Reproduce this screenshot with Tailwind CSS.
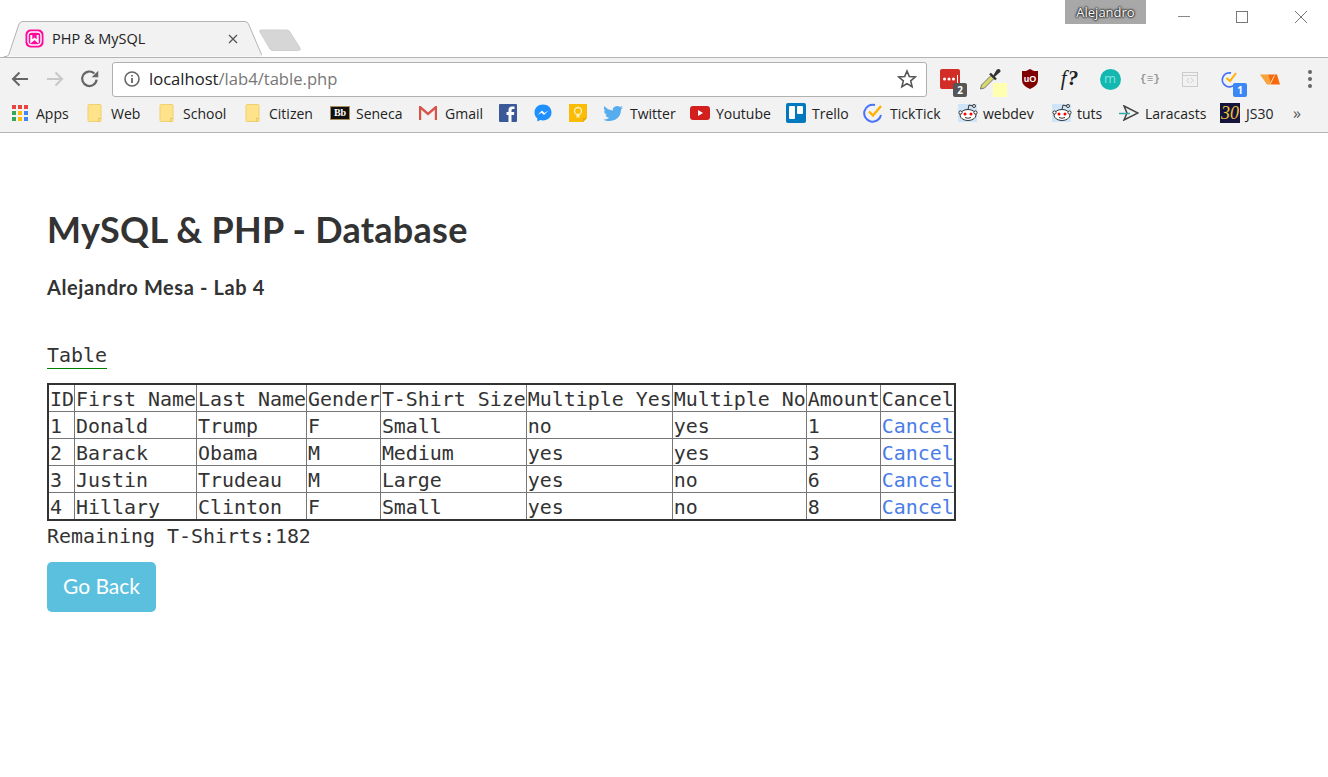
<!DOCTYPE html>
<html lang="en">
<head>
    <meta charset="UTF-8">
    <title>PHP &amp; MySQL</title>
    <script src="https://cdn.jsdelivr.net/npm/@tailwindcss/browser@4"></script>
</head>
<body class="bg-white overflow-hidden h-[777px] font-['Open_Sans',sans-serif]">

<!-- title bar with tabs -->
<div class="h-[57px] flex relative">
    <div class="relative w-[258px] h-[36px] mt-[21px] ml-[4px] flex items-center pl-[21px] pr-[24px] pb-[1px] text-[14.500px] text-[#222]">
        <svg class="absolute left-0 top-0" width="258" height="36" viewBox="0 0 258 36">
            <path d="M0 35.5 H2 Q4 35.5 5 33 L15 3 Q16 .5 19 .5 H241 Q243.500 .5 244.500 3 L256 30 Q258 35.500 260 35.500" fill="#f2f2f2" stroke="#b4b4b4"/>
        </svg>
        <svg class="relative mr-[8px]" width="19" height="19" viewBox="0 0 19 19">
            <rect x="0.500" y="0.500" width="18" height="18" rx="5" fill="#ff0a9c"/>
            <rect x="3" y="3" width="13" height="13" rx="3.500" fill="none" stroke="#fff" stroke-width="1.400"/>
            <path d="M6.300 6 V12.500 L9.500 9.800 L12.700 12.500 V6" fill="none" stroke="#fff" stroke-width="2"/>
        </svg>
        <span class="relative flex-1">PHP &amp; MySQL</span>
        <svg class="relative" width="10" height="10" viewBox="0 0 10 10"><path d="M1 1 L9 9 M9 1 L1 9" stroke="#555" stroke-width="1.300"/></svg>
    </div>
    <svg class="mt-[29px] -ml-[3px]" width="44" height="23" viewBox="0 0 44 23">
        <path d="M2 1 H28 Q30 1 31 3 L41 19 Q42 21.500 39 21.500 H14 Q12 21.500 11 20 L1 3 Q0 1 2 1Z" fill="#d6d6d6" stroke="#cfcfcf"/>
    </svg>
    <div class="absolute left-[1065px] top-0 w-[81px] h-[24px] bg-[#a8a8a8] text-white text-[13px] leading-[24px] text-center [text-shadow:0_0_1px_#222,0_0_2px_#222,0_0_2px_#222,0_0_3px_#333]">Alejandro</div>
    <svg class="absolute left-[1178px] top-[10px]" width="135" height="14" viewBox="0 0 135 14">
        <path d="M0 6.500 H12" stroke="#888"/>
        <rect x="58.500" y="1.500" width="11" height="11" fill="none" stroke="#777"/>
        <path d="M117 1 L129 13 M129 1 L117 13" stroke="#777"/>
    </svg>
</div>

<!-- toolbar -->
<div class="h-[39px] bg-[#f2f2f2] border-t border-[#b4b4b4] flex items-center relative pt-[4px]">
    <div class="w-[112px] flex items-center pl-[10px] gap-[15px] shrink-0">
        <svg width="20" height="20" viewBox="0 0 20 20"><path d="M18 10 H3 M9.500 3.500 L3 10 L9.500 16.500" fill="none" stroke="#666" stroke-width="2"/></svg>
        <svg width="20" height="20" viewBox="0 0 20 20"><path d="M2 10 H17 M10.500 3.500 L17 10 L10.500 16.500" fill="none" stroke="#c8c8c8" stroke-width="2"/></svg>
        <svg width="22" height="22" viewBox="0 0 20 20" class="-ml-[1px]"><path d="M16 10.500 A6.600 6.600 0 1 1 14 5" fill="none" stroke="#666" stroke-width="2"/><path d="M17.500 2.500 V8.500 H11.500Z" fill="#666"/></svg>
    </div>
    <div class="w-[815px] h-[35px] bg-white border border-[#b0b0b0] rounded-[3px] flex items-center pl-[10px] pr-[9px] shrink-0">
        <svg class="mr-[8px]" width="18" height="18" viewBox="0 0 18 18"><circle cx="9" cy="9" r="7" fill="none" stroke="#666" stroke-width="1.600"/><path d="M9 8 V13 M9 5 V6.600" stroke="#666" stroke-width="1.800"/></svg>
        <span class="flex-1 mt-px text-[16.600px] text-[#777]"><span class="text-[#222]">localhost</span>/lab4/table.php</span>
        <svg width="20" height="20" viewBox="0 0 20 20"><path d="M10 2 L12.300 7.500 L18.300 8 L13.700 11.900 L15.100 17.700 L10 14.600 L4.900 17.700 L6.300 11.900 L1.700 8 L7.700 7.500Z" fill="none" stroke="#555" stroke-width="1.600"/></svg>
    </div>
    <div class="flex ml-[3px]">
        <div class="w-[40px] h-[28px] relative flex justify-center items-center">
            <svg width="22" height="22" viewBox="0 0 22 22"><rect x="1" y="1" width="20" height="20" rx="2" fill="#d32d27"/><circle cx="5.500" cy="11" r="1.500" fill="#fff"/><circle cx="10" cy="11" r="1.500" fill="#fff"/><circle cx="14.500" cy="11" r="1.500" fill="#fff"/><path d="M18.500 7 V15" stroke="#fff"/></svg>
            <span class="absolute left-[23px] top-[18px] w-[14px] h-[14px] bg-[#555] rounded-[2px] text-white text-[10px] leading-[14px] text-center font-bold">2</span>
        </div>
        <div class="w-[40px] h-[28px] relative flex justify-center items-center">
            <svg width="24" height="24" viewBox="0 0 24 24"><path d="M2.500 22 L3.500 18 L13 8.500 L16 11.500 L6.500 21Z" fill="#d9d76a" stroke="#777"/><path d="M12 6.500 L18 12.500" stroke="#333" stroke-width="2.400"/><path d="M15 9 L18.500 3 Q21 1 22.500 3.500 Q23 5 21 6 L16 10.500Z" fill="#333"/></svg>
            <span class="absolute left-[23px] top-[18px] w-[14px] h-[14px] bg-[#ffffb0]"></span>
        </div>
        <div class="w-[40px] h-[28px] flex justify-center items-center">
            <svg width="20" height="22" viewBox="0 0 20 22"><path d="M10 1 L14 3 H18 V12 Q18 18 10 21 Q2 18 2 12 V3 H6Z" fill="#800000"/><text x="10" y="14" font-size="9" font-weight="700" fill="#fff" text-anchor="middle" font-family="Liberation Sans">uO</text></svg>
        </div>
        <div class="w-[40px] h-[28px] flex justify-center items-center font-['Liberation_Serif',serif] italic text-[21px] tracking-[1px] text-[#222]">f<b>?</b></div>
        <div class="w-[40px] h-[28px] flex justify-center items-center">
            <span class="w-[21px] h-[21px] rounded-full bg-[#14b8b0] text-[#7fe3dc] text-[13px] leading-[19px] text-center">m</span>
        </div>
        <div class="w-[40px] h-[28px] flex justify-center items-center text-[11px] font-bold text-[#999] font-['Liberation_Mono',monospace]">{≡}</div>
        <div class="w-[40px] h-[28px] flex justify-center items-center">
            <svg width="16" height="15" viewBox="0 0 16 15"><rect x=".5" y=".5" width="15" height="14" fill="none" stroke="#ccc"/><path d="M.5 3.500 H15.500 M7 6 L5 8.500 L7 11 M9 6 L11 8.500 L9 11" fill="none" stroke="#ccc"/></svg>
        </div>
        <div class="w-[40px] h-[28px] relative flex justify-center items-center">
            <svg width="18" height="18" viewBox="0 0 18 18"><path d="M14 14 A7 7 0 1 1 10 3" fill="none" stroke="#4772fa" stroke-width="1.800"/><path d="M5.500 8 L9 11 L15 3" fill="none" stroke="#ffb000" stroke-width="2"/></svg>
            <span class="absolute left-[23px] top-[18px] w-[14px] h-[14px] bg-[#3b87f5] rounded-[2px] text-white text-[10px] leading-[14px] text-center font-bold">1</span>
        </div>
        <div class="w-[40px] h-[28px] flex justify-center items-center">
            <svg width="20" height="11" viewBox="0 0 20 11"><path d="M0 .5 H8 L11 10.500 H7Z" fill="#f9a13a"/><path d="M8 .5 H17 L20 10.500 H11Z" fill="#f76a0c"/><path d="M14.500 1.500 L10.500 9.500" stroke="#ffd9b0" stroke-width="1"/></svg>
        </div>
        <div class="w-[40px] h-[28px] flex flex-col justify-center items-center gap-[3px]">
            <span class="w-[4px] h-[4px] rounded-full bg-[#666]"></span>
            <span class="w-[4px] h-[4px] rounded-full bg-[#666]"></span>
            <span class="w-[4px] h-[4px] rounded-full bg-[#666]"></span>
        </div>
    </div>
</div>

<!-- bookmarks bar -->
<div class="h-[37px] bg-[#f2f2f2] border-b border-[#b4b4b4] flex items-center pl-[12px] pb-[2px] text-[14px] text-[#222] whitespace-nowrap">
    <div class="w-[75px] flex items-center gap-[8px]">
        <svg width="16" height="16" viewBox="0 0 16 16">
            <rect x="0" y="0" width="4" height="4" fill="#e8453c"/><rect x="6" y="0" width="4" height="4" fill="#e8453c"/><rect x="12" y="0" width="4" height="4" fill="#e8453c"/>
            <rect x="0" y="6" width="4" height="4" fill="#34a853"/><rect x="6" y="6" width="4" height="4" fill="#fbbc05"/><rect x="12" y="6" width="4" height="4" fill="#4285f4"/>
            <rect x="0" y="12" width="4" height="4" fill="#34a853"/><rect x="6" y="12" width="4" height="4" fill="#fbbc05"/><rect x="12" y="12" width="4" height="4" fill="#4285f4"/>
        </svg>
        Apps
    </div>
    <div class="w-[72px] flex items-center gap-[9px]">
        <svg width="15" height="18" viewBox="0 0 15 18"><path d="M1 1.500 Q1 .5 2 .5 H13 Q14 .5 14 1.500 V17.500 H2 Q1 17.500 1 16.500Z" fill="#ffe38a" stroke="#f0d070"/><path d="M11.500 17.500 V14.500 H14" fill="none" stroke="#e8c560"/></svg>
        Web
    </div>
    <div class="w-[86px] flex items-center gap-[9px]">
        <svg width="15" height="18" viewBox="0 0 15 18"><path d="M1 1.500 Q1 .5 2 .5 H13 Q14 .5 14 1.500 V17.500 H2 Q1 17.500 1 16.500Z" fill="#ffe38a" stroke="#f0d070"/><path d="M11.500 17.500 V14.500 H14" fill="none" stroke="#e8c560"/></svg>
        School
    </div>
    <div class="w-[85px] flex items-center gap-[9px]">
        <svg width="15" height="18" viewBox="0 0 15 18"><path d="M1 1.500 Q1 .5 2 .5 H13 Q14 .5 14 1.500 V17.500 H2 Q1 17.500 1 16.500Z" fill="#ffe38a" stroke="#f0d070"/><path d="M11.500 17.500 V14.500 H14" fill="none" stroke="#e8c560"/></svg>
        Citizen
    </div>
    <div class="w-[89px] flex items-center gap-[6px]">
        <span class="w-[20px] h-[14px] bg-[#111] border border-[#a98f5a] text-white text-[10px] leading-[12px] text-center font-['Liberation_Serif',serif] font-bold">Bb</span>
        Seneca
    </div>
    <div class="w-[80px] flex items-center gap-[8px]">
        <svg width="18" height="14" viewBox="0 0 18 14"><path d="M1 14 V1 L9 8 L17 1 V14" fill="none" stroke="#d9534a" stroke-width="2.400"/></svg>
        Gmail
    </div>
    <div class="w-[35px] flex items-center">
        <svg width="18" height="18" viewBox="0 0 18 18"><rect width="18" height="18" rx="1" fill="#3b5998"/><path d="M12.500 18 V11 H15 L15.300 8 H12.500 V6.300 Q12.500 5 14 5 H15.500 V2.500 H13 Q9.500 2.500 9.500 6 V8 H7.500 V11 H9.500 V18Z" fill="#fff"/></svg>
    </div>
    <div class="w-[34px] flex items-center">
        <svg width="18" height="18" viewBox="0 0 18 18"><path d="M9 .5 C4 .5 .5 4 .5 8.500 C.5 11 1.500 13 3.300 14.300 V17.500 L6.300 16 Q7.500 16.400 9 16.400 C14 16.400 17.500 13 17.500 8.500 C17.500 4 14 .5 9 .5Z" fill="#1e90ff"/><path d="M3.500 11 L8 6.500 L10.500 9 L14.500 6.500 L10 11 L7.500 8.700Z" fill="#fff"/></svg>
    </div>
    <div class="w-[35px] flex items-center">
        <svg width="20" height="20" viewBox="0 0 20 20"><path d="M1 1 H19 V15 L15 19 H1Z" fill="#fbbc05"/><path d="M19 15 L15 19 V15Z" fill="#e8a800"/><circle cx="10" cy="8" r="3.500" fill="none" stroke="#fff3c4" stroke-width="1.300"/><path d="M8.500 12 H11.500 V14.500 H8.500Z" fill="#fff3c4"/></svg>
    </div>
    <div class="w-[87px] flex items-center gap-[7px]">
        <svg width="20" height="17" viewBox="0 0 20 17"><path d="M20 2.500 Q18.800 3 17.700 3.200 Q19 2.400 19.500 1 Q18.200 1.700 17 2 C15 0 11 1 10 3.500 Q9.700 4.500 10 5.500 C6.500 5.300 3.300 3.700 1.400 1 C.5 3 1 5 2.700 6.300 Q1.800 6.300 1 5.800 C1 7.800 2.300 9.300 4.200 9.800 Q3.300 10 2.500 9.900 C3 11.500 4.500 12.600 6.300 12.700 C4.500 14 2.500 14.600 .3 14.400 C6 18 18 16 18 4.500 Q19.200 3.700 20 2.500Z" fill="#55acee"/></svg>
        Twitter
    </div>
    <div class="w-[96px] flex items-center gap-[6px]">
        <svg width="20" height="14" viewBox="0 0 20 14"><rect width="20" height="14" rx="3" fill="#d3201f"/><path d="M8 4 L13 7 L8 10Z" fill="#fff"/></svg>
        Youtube
    </div>
    <div class="w-[77px] flex items-center gap-[6px]">
        <svg width="20" height="20" viewBox="0 0 20 20"><rect width="20" height="20" rx="2" fill="#0079bf"/><rect x="3" y="3" width="6" height="13" rx="1" fill="#fff"/><rect x="11" y="3" width="6" height="8" rx="1" fill="#fff"/></svg>
        Trello
    </div>
    <div class="w-[95px] flex items-center gap-[7px]">
        <svg width="20" height="20" viewBox="0 0 20 20"><path d="M18 12 A8.500 8.500 0 1 1 12 2" fill="none" stroke="#4772fa" stroke-width="2"/><path d="M6 8.500 L10 12.500 L18 3" fill="none" stroke="#ffb000" stroke-width="2.400"/></svg>
        TickTick
    </div>
    <div class="w-[94px] flex items-center gap-[5px]">
        <svg width="20" height="20" viewBox="0 0 20 20"><rect width="19" height="18" y="1" fill="#cfe5f7"/><ellipse cx="10" cy="12" rx="8" ry="5.500" fill="#fff" stroke="#333"/><circle cx="2.500" cy="9.500" r="1.600" fill="#fff" stroke="#333"/><circle cx="17.500" cy="9.500" r="1.600" fill="#fff" stroke="#333"/><circle cx="7" cy="11" r="1.500" fill="#f00"/><circle cx="13" cy="11" r="1.500" fill="#f00"/><path d="M7 14.500 Q10 16 13 14.500 M10 6.500 L11 2 L15 3" fill="none" stroke="#333"/><circle cx="16" cy="3" r="1.500" fill="#fff" stroke="#333"/></svg>
        webdev
    </div>
    <div class="w-[67px] flex items-center gap-[5px]">
        <svg width="20" height="20" viewBox="0 0 20 20"><rect width="19" height="18" y="1" fill="#cfe5f7"/><ellipse cx="10" cy="12" rx="8" ry="5.500" fill="#fff" stroke="#333"/><circle cx="2.500" cy="9.500" r="1.600" fill="#fff" stroke="#333"/><circle cx="17.500" cy="9.500" r="1.600" fill="#fff" stroke="#333"/><circle cx="7" cy="11" r="1.500" fill="#f00"/><circle cx="13" cy="11" r="1.500" fill="#f00"/><path d="M7 14.500 Q10 16 13 14.500 M10 6.500 L11 2 L15 3" fill="none" stroke="#333"/><circle cx="16" cy="3" r="1.500" fill="#fff" stroke="#333"/></svg>
        tuts
    </div>
    <div class="w-[101px] flex items-center gap-[6px]">
        <svg width="20" height="16" viewBox="0 0 20 16"><path d="M5 1 L19 8 L5 15 L8 8Z" fill="none" stroke="#444" stroke-width="1.500"/><path d="M0 8.500 H11" stroke="#3aa" stroke-width="1.500"/></svg>
        Laracasts
    </div>
    <div class="w-[73px] flex items-center gap-[6px]">
        <span class="w-[20px] h-[20px] bg-[#14143c] text-[#f0c23a] text-[18px] leading-[20px] text-center font-['Liberation_Serif',serif] italic">30</span>
        JS30
    </div>
    <span class="text-[#555] text-[16px] leading-none">»</span>
</div>

<!-- page -->
<div class="px-[47px] pt-[76px] text-[#333]">
    <h1 class="font-['Lato',sans-serif] font-bold text-[36px] tracking-[0.250px] leading-[40px] h-[40px]">MySQL &amp; PHP - Database</h1>
    <h4 class="font-['Lato',sans-serif] font-bold text-[20px] tracking-[0.600px] leading-[24px] mt-[26px]">Alejandro Mesa - Lab 4</h4>

    <div class="font-['DejaVu_Sans_Mono',monospace] text-[19.930px] leading-[26px]">
        <div class="mt-[43px] w-fit border-b border-[#008000] h-[27px] leading-[27px]">Table</div>
        <table class="mt-[14px] border-collapse border-2 border-[#333]">
            <tbody class="[&_td]:border [&_td]:border-[#777] [&_td]:pl-px [&_td]:pr-0 [&_td]:pt-[4px] [&_td]:pb-0 [&_td]:leading-[22px] [&_td]:h-[27px] [&_td]:whitespace-pre">
                <tr><td>ID</td><td>First Name</td><td>Last Name</td><td>Gender</td><td>T-Shirt Size</td><td>Multiple Yes</td><td>Multiple No</td><td>Amount</td><td>Cancel</td></tr>
                <tr><td>1</td><td>Donald</td><td>Trump</td><td>F</td><td>Small</td><td>no</td><td>yes</td><td>1</td><td><a href="#" class="text-[#4a7ce8]">Cancel</a></td></tr>
                <tr><td>2</td><td>Barack</td><td>Obama</td><td>M</td><td>Medium</td><td>yes</td><td>yes</td><td>3</td><td><a href="#" class="text-[#4a7ce8]">Cancel</a></td></tr>
                <tr><td>3</td><td>Justin</td><td>Trudeau</td><td>M</td><td>Large</td><td>yes</td><td>no</td><td>6</td><td><a href="#" class="text-[#4a7ce8]">Cancel</a></td></tr>
                <tr><td>4</td><td>Hillary</td><td>Clinton</td><td>F</td><td>Small</td><td>yes</td><td>no</td><td>8</td><td><a href="#" class="text-[#4a7ce8]">Cancel</a></td></tr>
            </tbody>
        </table>
        <p class="mt-[3px]">Remaining T-Shirts:182</p>
    </div>
    <a href="#" class="block mt-[12px] w-[109px] h-[50px] bg-[#5bc0de] rounded-[5px] text-white text-[21px] leading-[48px] text-center font-['Lato',sans-serif]">Go Back</a>
</div>
</body>
</html>
